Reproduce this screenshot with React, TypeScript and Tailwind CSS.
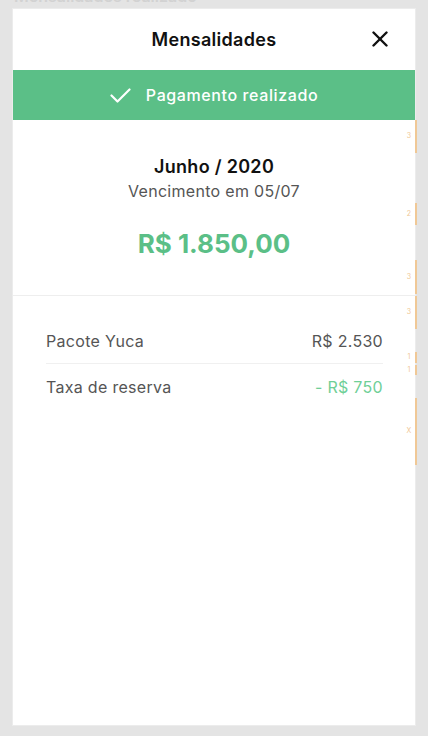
import React from 'react';

const marks = [
  { top: 120, h: 33, label: '3' },
  { top: 203, h: 22, label: '2' },
  { top: 260, h: 34, label: '3' },
  { top: 296, h: 33, label: '3' },
  { top: 352, h: 11, label: '1' },
  { top: 365, h: 10, label: '1' },
  { top: 398, h: 67, label: 'X' },
];

export default function App() {
  return (
    <div
      className="relative w-[428px] h-[736px] overflow-hidden bg-[#e4e4e4]"
      style={{ fontFamily: 'Inter, "Open Sans", sans-serif' }}
    >
      {/* page behind the sheet */}
      <div className="absolute left-[14px] top-[-16px] text-[16px] font-semibold text-[#d2d2d2]">
        Mensalidades realizado
      </div>

      <div className="absolute left-[12px] top-[8px] w-[404px] h-[718px] bg-white border border-[#ececec] flex flex-col">
        {/* Header */}
        <div className="relative h-[61px] flex items-center justify-center">
          <h1 className="text-[18px] font-semibold text-[#111] tracking-[0.3px]">Mensalidades</h1>
          <button className="absolute right-[27px] top-[22px]">
            <svg width="16" height="16" viewBox="0 0 16 16" fill="none" stroke="#111" strokeWidth="2.4" strokeLinecap="round">
              <line x1="1.5" y1="1.5" x2="14.5" y2="14.5" />
              <line x1="14.5" y1="1.5" x2="1.5" y2="14.5" />
            </svg>
          </button>
        </div>

        {/* Status banner */}
        <div className="h-[50px] bg-[#5bbf87] flex items-center justify-center gap-[15px] text-white">
          <svg width="21" height="15" viewBox="0 0 21 15" fill="none" stroke="white" strokeWidth="2.2" strokeLinecap="round" strokeLinejoin="round">
            <polyline points="1.5,7.5 7.5,13.5 19.5,1.5" />
          </svg>
          <span className="text-[16px] font-medium tracking-[0.6px]">Pagamento realizado</span>
        </div>

        {/* Summary */}
        <div className="flex flex-col items-center pt-[35px] pb-[35px] border-b border-[#eeeeee]">
          <div className="text-[18px] leading-[24px] font-semibold text-[#111] tracking-[0.3px]">Junho / 2020</div>
          <div className="text-[16px] leading-[24px] text-[#555] tracking-[0.3px]">Vencimento em 05/07</div>
          <div className="mt-[25px] text-[26px] leading-[32px] font-bold text-[#5bbf87]">R$ 1.850,00</div>
        </div>

        {/* Items */}
        <div className="pl-[33px] pr-[32px] pt-[33px] text-[16px] leading-[24px] tracking-[0.3px]">
          <div className="flex justify-between pb-[10px] border-b border-[#f0f0f0] text-[#555]">
            <span>Pacote Yuca</span>
            <span>R$ 2.530</span>
          </div>
          <div className="flex justify-between pt-[11px] text-[#555]">
            <span>Taxa de reserva</span>
            <span className="text-[#6fcf97]">- R$ 750</span>
          </div>
        </div>
      </div>

      {/* scroll markers peeking through on the right */}
      {marks.map((m, i) => (
        <div key={i} className="absolute left-[404px] flex items-center" style={{ top: m.top, height: m.h }}>
          <span className="w-[10px] text-[7px] text-[#f0c896] text-center">{m.label}</span>
          <span className="ml-[1px] w-[2px] h-full bg-[#f0c896]" />
        </div>
      ))}
    </div>
  );
}
